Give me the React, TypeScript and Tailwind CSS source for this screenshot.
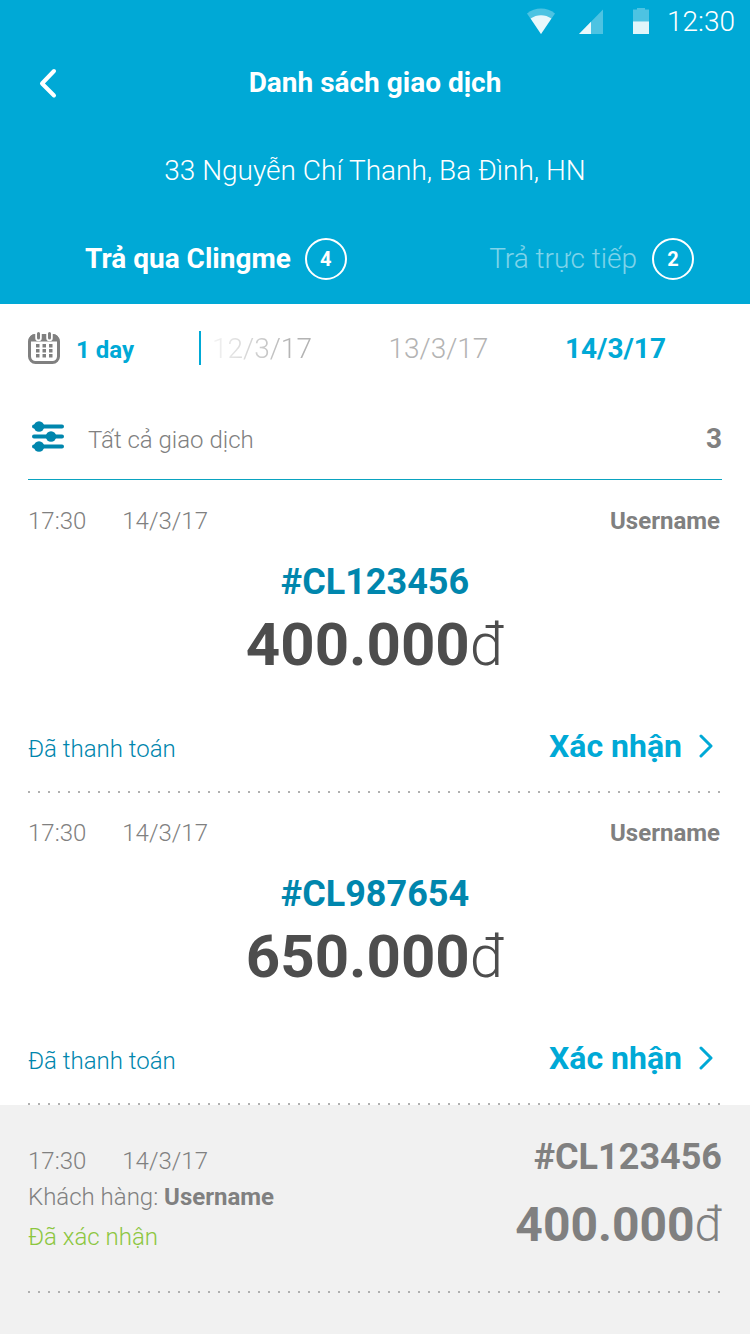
import React from "react";

type Transaction = {
  code: string;
  amount: string;
  time: string;
  date: string;
  user: string;
};

const pending: Transaction[] = [
  { code: "#CL123456", amount: "400.000", time: "17:30", date: "14/3/17", user: "Username" },
  { code: "#CL987654", amount: "650.000", time: "17:30", date: "14/3/17", user: "Username" },
];

const confirmed: Transaction = {
  code: "#CL123456",
  amount: "400.000",
  time: "17:30",
  date: "14/3/17",
  user: "Username",
};

function StatusBar() {
  return (
    <div className="flex h-11 items-center justify-end pr-[15px]">
      <svg className="mr-6 h-7 w-7" viewBox="0 0 28 28" aria-hidden="true">
        <path d="M0 5.500C8-1.300 20-1.300 28 5.500L14 26z" fill="#fff" opacity=".3" />
        <path d="M3.600 10.500C9.600 6 18.400 6 24.400 10.500L14 26z" fill="#fff" opacity=".88" />
      </svg>
      <svg className="mr-[30px] h-7 w-6" viewBox="0 0 24 28" aria-hidden="true">
        <path d="M0 26L24 1.500V26z" fill="#fff" opacity=".3" />
        <path d="M0 26l12-12.250V26z" fill="#fff" opacity=".88" />
      </svg>
      <svg className="mr-[18px] h-7 w-4" viewBox="0 0 16 28" aria-hidden="true">
        <path d="M0 14V1.500h4V-.5h8v2h4V14z" fill="#fff" opacity=".3" />
        <path d="M0 13.500h16V26H0z" fill="#fff" opacity=".88" />
      </svg>
      <span className="text-[28px] leading-10 font-light">12:30</span>
    </div>
  );
}

function CalendarIcon() {
  return (
    <svg className="h-8 w-8 shrink-0" viewBox="0 0 32 32" aria-hidden="true">
      <rect x="1.500" y="3.500" width="29" height="27" rx="6" fill="#fff" stroke="#808080" strokeWidth="3" />
      <path d="M1 9.500V8a6 6 0 0 1 6-6h18a6 6 0 0 1 6 6v1.500z" fill="#808080" />
      <path d="M10.500 1v5M21.500 1v5" stroke="#fff" strokeWidth="6.500" strokeLinecap="round" />
      <path d="M10.500 1.500v4.500M21.500 1.500v4.500" stroke="#808080" strokeWidth="3" strokeLinecap="round" />
      <path
        d="M8 12h3.500v3.500H8zm6.500 0H18v3.500h-3.500zm6.500 0h3.500v3.500H21zM8 17h3.500v3.500H8zm6.500 0H18v3.500h-3.500zm6.500 0h3.500v3.500H21zM8 22h3.500v3.500H8zm6.500 0H18v3.500h-3.500zm6.500 0h3.500v3.500H21z"
        fill="#808080"
      />
    </svg>
  );
}

function SlidersIcon() {
  return (
    <svg className="mt-[2px] h-8 w-8 shrink-0" viewBox="0 0 32 32" aria-hidden="true">
      <path d="M2 6.500h28M2 16.500h28M2 26.500h28" stroke="#0086ad" strokeWidth="4" strokeLinecap="round" />
      <circle cx="7" cy="6.500" r="5.200" fill="#0086ad" />
      <circle cx="19" cy="16.500" r="5.200" fill="#0086ad" />
      <circle cx="7" cy="26.500" r="5.200" fill="#0086ad" />
    </svg>
  );
}

function Badge({ count }: { count: number }) {
  return (
    <span className="flex h-[42px] w-[42px] items-center justify-center rounded-full border-2 border-white text-xl leading-none font-bold text-white">
      {count}
    </span>
  );
}

function DottedLine() {
  return (
    <div className="h-[2px] bg-[radial-gradient(circle_at_1px_1px,#b0b0b0_1px,transparent_1.5px)] bg-[length:10px_2px] bg-repeat-x" />
  );
}

function PendingItem({ item }: { item: Transaction }) {
  return (
    <li className="px-7 pt-6">
      <div className="flex justify-between pr-[2px] text-2xl leading-8 text-[#808080]">
        <div className="flex gap-9 font-light">
          <span>{item.time}</span>
          <span>{item.date}</span>
        </div>
        <span className="font-bold">{item.user}</span>
      </div>
      <p className="mt-[25px] text-center text-4xl leading-10 font-bold text-[#0086ad]">{item.code}</p>
      <p className="mt-[11px] text-center text-[60px] leading-[64px] font-bold text-[#4d4d4d]">
        {item.amount}
        <span className="font-light">đ</span>
      </p>
      <div className="mt-[49px] flex items-baseline justify-between pb-[22px]">
        <span className="text-2xl leading-10 font-light text-[#0086ad]">Đã thanh toán</span>
        <button type="button" className="flex items-center gap-4 pr-2 text-[32px] leading-10 font-bold text-[#00a9d6]">
          Xác nhận
          <svg className="h-6 w-4" viewBox="0 0 16 24" fill="none" aria-hidden="true">
            <path d="M3 2l10 10L3 22" stroke="currentColor" strokeWidth="3" strokeLinecap="round" strokeLinejoin="round" />
          </svg>
        </button>
      </div>
      <DottedLine />
    </li>
  );
}

function ConfirmedItem({ item }: { item: Transaction }) {
  return (
    <li className="grow bg-[#f1f1f1] px-7 pb-10">
      <div className="flex justify-between pt-8 pb-[38px] text-[#808080]">
        <div className="pt-2 text-2xl leading-8 font-light">
          <div className="flex gap-9">
            <span>{item.time}</span>
            <span>{item.date}</span>
          </div>
          <p className="mt-1">
            Khách hàng: <b className="font-bold">{item.user}</b>
          </p>
          <p className="mt-2 text-[#8cc63f]">Đã xác nhận</p>
        </div>
        <div className="text-right font-bold">
          <p className="text-4xl leading-10">{item.code}</p>
          <p className="mt-5 text-5xl leading-[56px]">
            {item.amount}
            <span className="font-light">đ</span>
          </p>
        </div>
      </div>
      <DottedLine />
    </li>
  );
}

export default function App() {
  return (
    <div className="flex min-h-screen flex-col bg-white font-['Roboto','Noto_Sans',sans-serif]">
      <header className="bg-[#00a9d6] text-white">
        <StatusBar />
        <div className="grid grid-cols-[72px_1fr_72px] items-center pt-[19px]">
          <button type="button" aria-label="Quay lại" className="flex h-10 items-center pl-9">
            <svg className="h-8 w-6" viewBox="0 0 24 32" fill="none" aria-hidden="true">
              <path d="M18 4L6 16.500 18 28.500" stroke="#fff" strokeWidth="4" strokeLinecap="round" strokeLinejoin="round" />
            </svg>
          </button>
          <h1 className="text-center text-[28px] leading-10 font-bold">Danh sách giao dịch</h1>
        </div>
        <p className="mt-12 text-center text-[28px] leading-10 font-light">33 Nguyễn Chí Thanh, Ba Đình, HN</p>
        <nav className="mt-[47px] flex justify-between pr-14 pb-6 pl-[85px] text-[28px] leading-10">
          <button type="button" className="flex items-center gap-[14px] font-bold">
            Trả qua Clingme
            <Badge count={4} />
          </button>
          <button type="button" className="flex items-center gap-[15px] font-light">
            <span className="text-white/50">Trả trực tiếp</span>
            <Badge count={2} />
          </button>
        </nav>
      </header>

      <main className="flex grow flex-col">
        <div className="flex items-center pt-[27px] pl-7">
          <button type="button" className="flex w-[171px] items-center gap-4 text-2xl font-bold text-[#00a9d6]">
            <CalendarIcon />
            <span className="pt-1 leading-[30px]">1 day</span>
          </button>
          <div className="flex h-[34px] grow items-center justify-between border-l-2 border-[#00a9d6] pt-[2px] pr-[84px] pl-[11px] text-[28px] leading-8 font-light text-[#b3b3b3]">
            <button
              type="button"
              className="[mask-image:linear-gradient(to_right,rgba(0,0,0,0.15),black_80%)]"
            >
              12/3/17
            </button>
            <button type="button">13/3/17</button>
            <button type="button" className="font-bold text-[#00a9d6]">
              14/3/17
            </button>
          </div>
        </div>

        <div className="mx-7 mt-[53px] flex items-start border-b border-[#0aa3c0] pb-[21px] pl-1 text-[#808080]">
          <SlidersIcon />
          <div className="ml-6 flex grow items-baseline justify-between pt-[3px]">
            <span className="text-2xl leading-9 font-light">Tất cả giao dịch</span>
            <span className="text-[28px] leading-9 font-bold">3</span>
          </div>
        </div>

        <ul className="flex grow flex-col pt-px">
          {pending.map((item) => (
            <PendingItem key={item.code} item={item} />
          ))}
          <ConfirmedItem item={confirmed} />
        </ul>
      </main>
    </div>
  );
}
